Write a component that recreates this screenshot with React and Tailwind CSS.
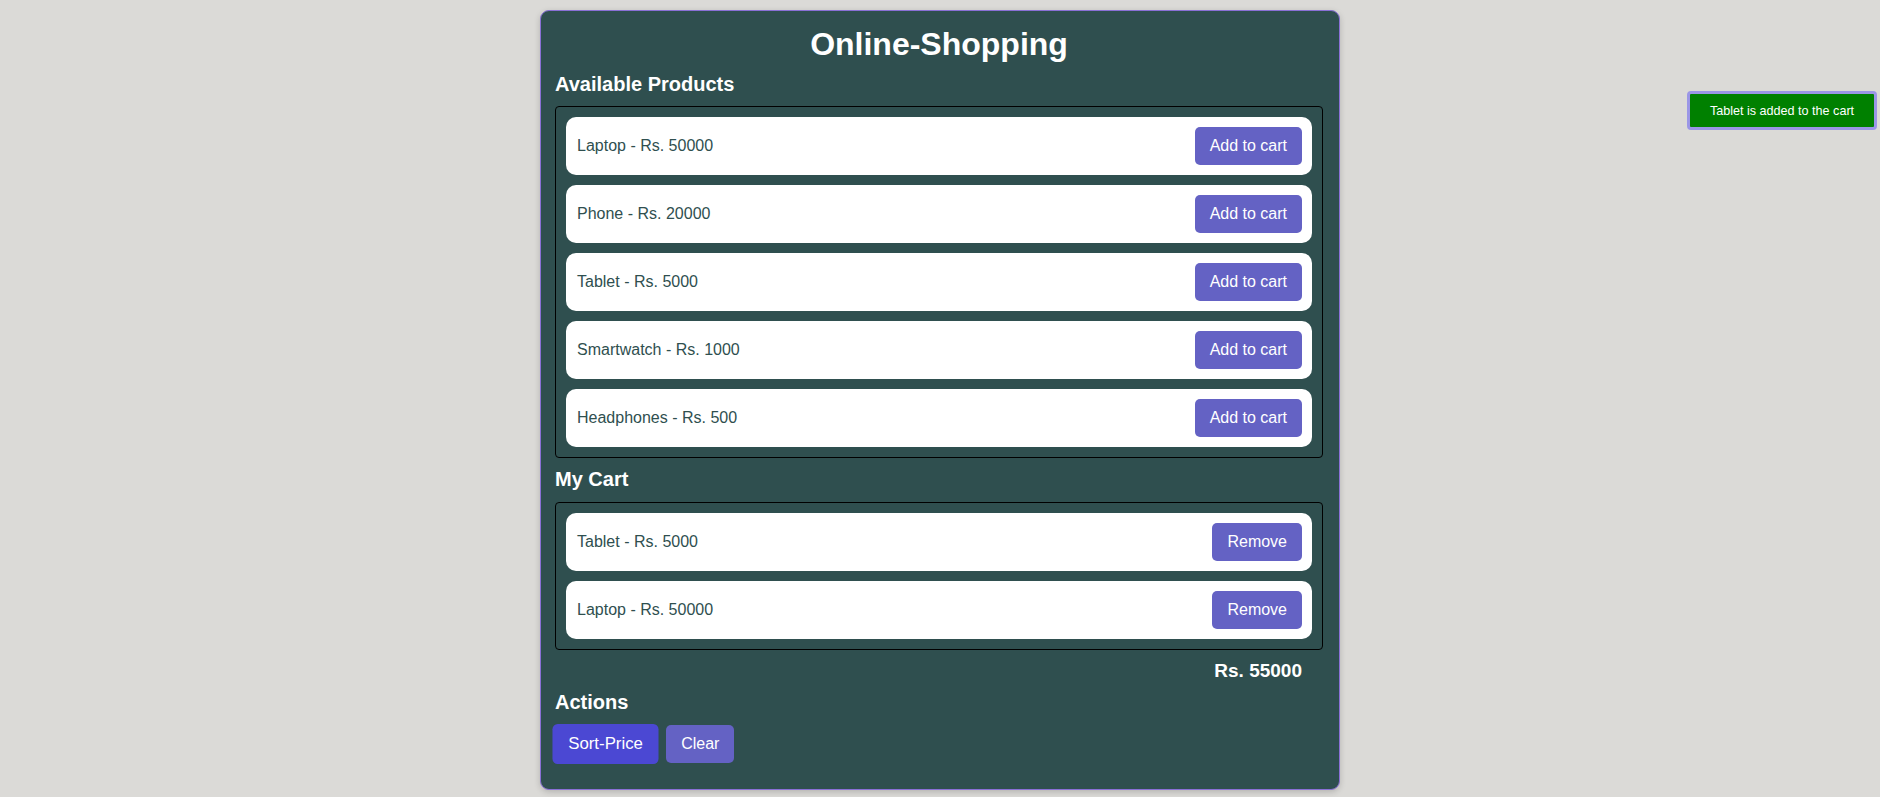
import React from "react";

const products = [
  { name: "Laptop", price: 50000 },
  { name: "Phone", price: 20000 },
  { name: "Tablet", price: 5000 },
  { name: "Smartwatch", price: 1000 },
  { name: "Headphones", price: 500 },
];

const cart = [
  { name: "Tablet", price: 5000 },
  { name: "Laptop", price: 50000 },
];

function Row({ item, label }) {
  return (
    <div className="flex items-center justify-between bg-white rounded-[10px] p-[10px]">
      <span className="text-[16px] leading-[18px] text-[#2f4f4f] pl-[1px]">
        {item.name} - Rs. {item.price}
      </span>
      <button className="bg-[#6462c4] text-white text-[16px] leading-[18px] px-[15px] py-[10px] rounded-[5px]">
        {label}
      </button>
    </div>
  );
}

export default function App() {
  return (
    <div className="min-h-screen bg-[#dbdad7] font-['Liberation_Sans',Arial,sans-serif] pt-[10px] relative">
      <div className="mx-auto w-[800px] bg-[#2f4f4f] border border-[#8a70d6] rounded-[9px] pl-[14px] pr-[16px] pt-[15px] pb-[26px] shadow-[0_2px_6px_rgba(0,0,0,0.18)]">
        <h1 className="text-[32px] leading-[37px] font-bold text-white text-center">
          Online-Shopping
        </h1>
        <h3 className="mt-[10px] mb-[10px] text-[20px] leading-[23px] font-bold text-white">
          Available Products
        </h3>
        <div className="border border-black rounded-[4px] p-[10px] flex flex-col gap-[10px]">
          {products.map((p) => (
            <Row key={p.name} item={p} label="Add to cart" />
          ))}
        </div>
        <h3 className="mt-[10px] mb-[11px] text-[20px] leading-[23px] font-bold text-white">
          My Cart
        </h3>
        <div className="border border-black rounded-[4px] p-[10px] flex flex-col gap-[10px]">
          {cart.map((p) => (
            <Row key={p.name} item={p} label="Remove" />
          ))}
        </div>
        <div className="mt-[10px] text-right pr-[21px] text-[19px] leading-[22px] font-bold text-white">
          Rs. 55000
        </div>
        <h3 className="mt-[9px] mb-[11px] text-[20px] leading-[23px] font-bold text-white">
          Actions
        </h3>
        <div className="flex gap-[10px]">
          <button className="bg-[#4b48d3] text-white text-[16px] leading-[18px] px-[15px] py-[10px] rounded-[5px] scale-[1.05]">
            Sort-Price
          </button>
          <button className="bg-[#6462c4] text-white text-[16px] leading-[18px] px-[15px] py-[10px] rounded-[5px]">
            Clear
          </button>
        </div>
      </div>
      <div className="absolute top-[91px] right-[3px] w-[190px] h-[39px] bg-[#008000] border-[3px] border-[#9b96e6] rounded-[4px] flex items-center justify-center pt-[1px] text-white text-[12.6px] leading-[15px]">
        Tablet is added to the cart
      </div>
    </div>
  );
}
